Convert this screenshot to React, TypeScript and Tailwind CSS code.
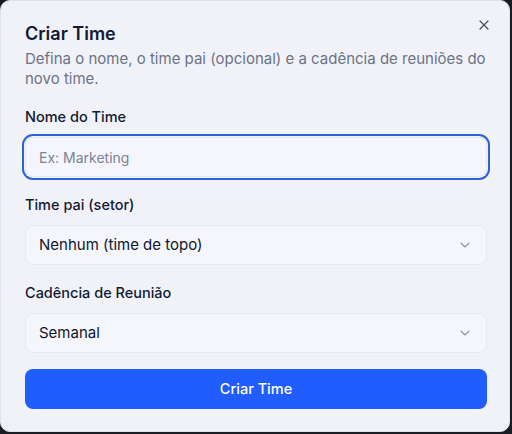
import { X, ChevronDown } from "lucide-react";

function Select({ value }: { value: string }) {
    return (
        <button className="flex h-10 w-full items-center justify-between rounded-lg border border-[#e4e8f1] bg-[#f4f6fc] pl-[13px] pr-[13px] text-left text-[15px] text-[#0f172a]">
            <span>{value}</span>
            <ChevronDown className="h-4 w-4 text-[#8a93a6]" strokeWidth={1.6} />
        </button>
    );
}

export default function App() {
    return (
        <div className="h-[434px] w-[512px] bg-[#1c1d22]" style={{ fontFamily: "Inter, 'Noto Sans', sans-serif" }}>
            <div className="relative flex h-[432px] w-[510px] flex-col rounded-[10px] border border-[#dfe3ec] bg-[#f0f2f8] pl-6 pr-[22px] pt-[21px]">
                <button className="absolute right-[17px] top-[16px] text-[#4b5262]">
                    <X className="h-4 w-4" strokeWidth={1.8} />
                </button>
                <h2 className="text-[18px] font-semibold leading-6 text-[#111a33]">Criar Time</h2>
                <p className="mt-[3px] text-[15px] leading-5 text-[#6b7285]">
                    Defina o nome, o time pai (opcional) e a cadência de reuniões do novo time.
                </p>
                <div className="mt-[18px] flex flex-col gap-[10px]">
                    <label className="text-[14.5px] font-medium leading-5 text-[#111a33]">Nome do Time</label>
                    <input
                        placeholder="Ex: Marketing"
                        className="h-10 w-full rounded-lg border border-[#e4e8f1] bg-[#f4f6fc] px-[13px] text-[14px] text-[#0f172a] outline-none ring-2 ring-[#2d62d6] ring-offset-1 ring-offset-[#f0f2f8] placeholder:text-[#7b8294]"
                    />
                </div>
                <div className="mt-[18px] flex flex-col gap-[10px]">
                    <label className="text-[14.5px] font-medium leading-5 text-[#111a33]">Time pai (setor)</label>
                    <Select value="Nenhum (time de topo)" />
                </div>
                <div className="mt-[18px] flex flex-col gap-[10px]">
                    <label className="text-[14.5px] font-medium leading-5 text-[#111a33]">Cadência de Reunião</label>
                    <Select value="Semanal" />
                </div>
                <button className="mt-[16px] h-10 w-full rounded-lg bg-[#215dfc] text-[14.5px] font-medium text-white">
                    Criar Time
                </button>
            </div>
        </div>
    );
}
